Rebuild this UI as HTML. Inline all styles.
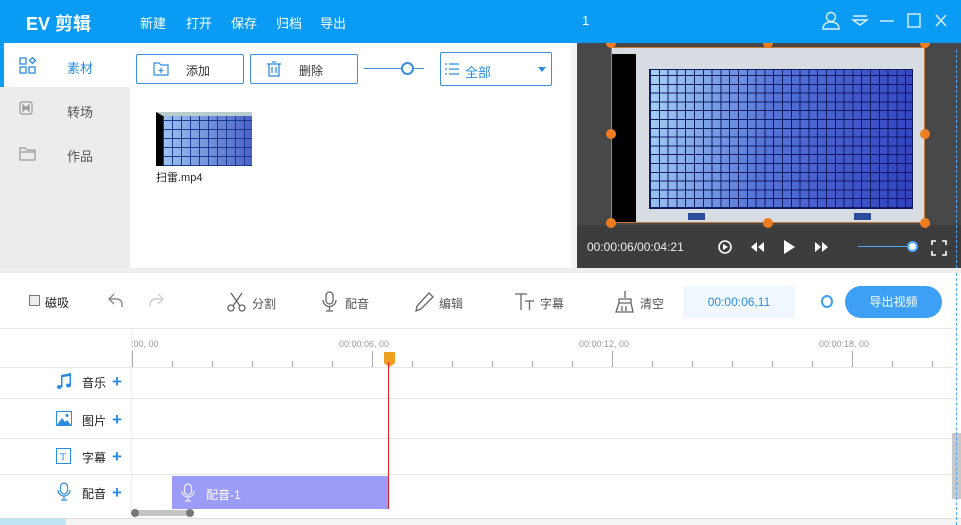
<!DOCTYPE html>
<html><head><meta charset="utf-8"><style>
*{margin:0;padding:0;box-sizing:border-box}
body{width:961px;height:525px;overflow:hidden;background:#fff;font-family:"Liberation Sans","Noto Sans CJK SC",sans-serif;font-size:12px;color:#333;position:relative}
.a{position:absolute}
.hdr{left:0;top:0;width:961px;height:43px;background:#0a9cf5;color:#fff}
.btn{border:1px solid #3d8fdc;border-radius:2px;background:#fff;color:#333;font-size:12px}
.tl{color:#555;font-size:12px}
.track{left:0;width:954px;border-top:1px solid #e6e6e6}
.lab{font-size:12px;color:#222}
.plus{color:#2b8de0;font-size:17px;font-weight:bold;line-height:17px}
</style></head><body>
<div class="a hdr">
 <div class="a" style="left:26px;top:10px;font-size:18px;font-weight:bold">EV 剪辑</div>
 <div class="a" style="left:140px;top:13px;font-size:13px">新建</div>
 <div class="a" style="left:186px;top:13px;font-size:13px">打开</div>
 <div class="a" style="left:231px;top:13px;font-size:13px">保存</div>
 <div class="a" style="left:276px;top:13px;font-size:13px">归档</div>
 <div class="a" style="left:320px;top:13px;font-size:13px">导出</div>
 <div class="a" style="left:582px;top:13px;font-size:13px">1</div>
 <svg class="a" style="left:820px;top:10px" width="130" height="22" fill="none" stroke="#dff0ff" stroke-width="1.4">
  <circle cx="11" cy="7" r="4.5"/><path d="M3 19c0-5 3.5-7 8-7s8 2 8 7z"/>
  <path d="M33 6h14M33 10h14l-7 5z"/>
  <path d="M60 11h14"/>
  <rect x="88" y="4" width="12" height="13"/>
  <path d="M116 5l10 11M126 5l-10 11"/>
 </svg>
</div>
<div class="a" style="left:0;top:43px;width:130px;height:225px;background:#ececec"></div>
<div class="a" style="left:0;top:43px;width:130px;height:44px;background:#fff;border-left:4px solid #0a9cf5"></div>
<svg class="a" style="left:19px;top:57px" width="18" height="18" fill="none" stroke="#2b8de0" stroke-width="1.3"><rect x="1" y="1" width="6" height="6"/><rect x="1" y="10" width="6" height="6"/><rect x="10" y="10" width="6" height="6"/><path d="M13.5 0.5l3 3-3 3-3-3z"/></svg>
<div class="a" style="left:67px;top:58px;color:#2b8de0;font-size:13px">素材</div>
<svg class="a" style="left:19px;top:101px" width="16" height="16" fill="none" stroke="#999" stroke-width="1.2"><rect x="1" y="1" width="12" height="12" rx="2"/><path d="M4 4v6l3-3zM10 4v6l-3-3z" fill="#999"/></svg>
<div class="a" style="left:67px;top:102px;color:#555;font-size:13px">转场</div>
<svg class="a" style="left:19px;top:146px" width="18" height="16" fill="none" stroke="#999" stroke-width="1.2"><path d="M1 2h5l2 2h8v10H1z M1 6h15"/></svg>
<div class="a" style="left:67px;top:146px;color:#555;font-size:13px">作品</div>
<div class="a btn" style="left:136px;top:54px;width:108px;height:30px"><svg class="a" style="left:16px;top:7px" width="16" height="14" fill="none" stroke="#2b8de0" stroke-width="1.2"><path d="M1 1h5l2 2h7v10H1z M8 6v5M5.5 8.5h5"/></svg><span class="a" style="left:49px;top:7px">添加</span></div>
<div class="a btn" style="left:250px;top:54px;width:108px;height:30px"><svg class="a" style="left:15px;top:6px" width="16" height="16" fill="none" stroke="#2b8de0" stroke-width="1.3"><path d="M1 3h14M3 3v12h10V3M6 1h4M6 6v6M10 6v6"/></svg><span class="a" style="left:48px;top:7px">删除</span></div>
<div class="a" style="left:364px;top:68px;width:60px;height:1px;background:#3d8fdc"></div>
<div class="a" style="left:401px;top:62px;width:13px;height:13px;border:2px solid #3d8fdc;border-radius:50%;background:#fff"></div>
<div class="a btn" style="left:440px;top:52px;width:112px;height:34px"><svg class="a" style="left:4px;top:10px" width="14" height="12" stroke="#2b8de0" stroke-width="1.2"><path d="M0 1h2M4 1h10M0 6h2M4 6h10M0 11h2M4 11h10"/></svg><span class="a" style="left:24px;top:9px;color:#2b8de0;font-size:13px">全部</span><div class="a" style="left:97px;top:14px;border:4px solid transparent;border-top:5px solid #2b8de0"></div></div>
<div class="a" style="left:156px;top:112px;width:96px;height:54px;background:repeating-linear-gradient(90deg,#1a3a90 0 1px,transparent 1px 9px),repeating-linear-gradient(0deg,#1a3a90 0 1px,transparent 1px 9px),linear-gradient(90deg,#9bc3f0,#4c63c8);border-left:7px solid #000;border-top:4px solid #bcc"></div>
<div class="a" style="left:156px;top:169px;font-size:11px;color:#222">扫雷.mp4</div>
<div class="a" style="left:571px;top:43px;width:6px;height:225px;background:#f4f4f4"></div>
<div class="a" style="left:577px;top:43px;width:384px;height:225px;background:#484848"></div>
<div class="a" style="left:611px;top:47px;width:314px;height:176px;background:#d8dde3;border:1px solid #c87a3a"></div>
<div class="a" style="left:612px;top:54px;width:24px;height:168px;background:#000"></div>
<div class="a" style="left:649px;top:69px;width:264px;height:140px;background:repeating-linear-gradient(90deg,#0c1a60 0 1px,transparent 1px 8.8px),repeating-linear-gradient(0deg,#0c1a60 0 1px,transparent 1px 8.8px),linear-gradient(100deg,#a9d2f6,#5574d8 45%,#3340c0);border:1px solid #0c1a60"></div>
<div class="a" style="left:688px;top:213px;width:17px;height:7px;background:#2a4c9a"></div>
<div class="a" style="left:854px;top:213px;width:17px;height:7px;background:#2a4c9a"></div>
<div class="a" style="left:577px;top:225px;width:384px;height:43px;background:#3d3d3d"></div>
<div class="a" style="left:606px;top:43px;width:10px;height:5px;background:#f07d20;border-radius:0 0 5px 5px"></div>
<div class="a" style="left:763px;top:43px;width:10px;height:5px;background:#f07d20;border-radius:0 0 5px 5px"></div>
<div class="a" style="left:920px;top:43px;width:10px;height:5px;background:#f07d20;border-radius:0 0 5px 5px"></div>
<div class="a" style="left:606px;top:129px;width:10px;height:10px;background:#f07d20;border-radius:50%"></div>
<div class="a" style="left:920px;top:129px;width:10px;height:10px;background:#f07d20;border-radius:50%"></div>
<div class="a" style="left:606px;top:218px;width:10px;height:10px;background:#f07d20;border-radius:50%"></div>
<div class="a" style="left:763px;top:218px;width:10px;height:10px;background:#f07d20;border-radius:50%"></div>
<div class="a" style="left:920px;top:218px;width:10px;height:10px;background:#f07d20;border-radius:50%"></div>
<div class="a" style="left:587px;top:240px;color:#eee;font-size:12px">00:00:06/00:04:21</div>
<svg class="a" style="left:716px;top:237px" width="120" height="20" fill="#fff"><circle cx="9" cy="10" r="6" fill="none" stroke="#fff" stroke-width="1.6"/><path d="M7 7v6l5-3z"/><path d="M41 5v10l-6-5zM48 5v10l-6-5z"/><path d="M68 3v14l11-7z"/><path d="M99 5v10l6-5zM106 5v10l6-5z"/></svg>
<div class="a" style="left:858px;top:246px;width:56px;height:1px;background:#4aa8ff"></div>
<div class="a" style="left:907px;top:241px;width:11px;height:11px;background:#fff;border:2px solid #4aa8ff;border-radius:50%"></div>
<svg class="a" style="left:931px;top:240px" width="16" height="16" fill="none" stroke="#fff" stroke-width="1.6"><path d="M1 5V1h4M11 1h4v4M15 11v4h-4M5 15H1v-4"/></svg>
<div class="a" style="left:956px;top:50px;height:218px;border-left:1px dashed #4aa8ff"></div>
<div class="a" style="left:0;top:268px;width:961px;height:5px;background:#eee"></div>
<div class="a" style="left:29px;top:295px;width:11px;height:11px;border:1px solid #777;background:#eee"></div>
<div class="a tl" style="left:45px;top:294px;color:#222">磁吸</div>
<svg class="a" style="left:108px;top:292px" width="56" height="18" fill="none" stroke-width="1.4"><path d="M6 2L1 7l5 5M1 7h8a5 5 0 0 1 5 5v3" stroke="#888"/><path d="M50 2l5 5-5 5M55 7h-8a5 5 0 0 0-5 5v3" stroke="#ccc"/></svg>
<svg class="a" style="left:226px;top:291px" width="22" height="22" fill="none" stroke="#666" stroke-width="1.3"><circle cx="5" cy="17" r="3"/><circle cx="16" cy="17" r="3"/><path d="M7 15L16 2M14 15L5 2"/></svg>
<div class="a tl" style="left:252px;top:295px">分割</div>
<svg class="a" style="left:322px;top:291px" width="16" height="22" fill="none" stroke="#666" stroke-width="1.3"><rect x="4" y="1" width="7" height="12" rx="3.5"/><path d="M1 9a6.5 6.5 0 0 0 13 0M7.5 16v4M4 20h7"/></svg>
<div class="a tl" style="left:345px;top:295px">配音</div>
<svg class="a" style="left:413px;top:291px" width="22" height="22" fill="none" stroke="#666" stroke-width="1.3"><path d="M16 2l4 4L8 18l-5 2 1-5z"/></svg>
<div class="a tl" style="left:439px;top:295px">编辑</div>
<svg class="a" style="left:514px;top:292px" width="22" height="20" fill="none" stroke="#666" stroke-width="1.3"><path d="M1 2h12M7 2v16M11 9h9M15.5 9v9"/></svg>
<div class="a tl" style="left:540px;top:295px">字幕</div>
<svg class="a" style="left:613px;top:290px" width="22" height="24" fill="none" stroke="#666" stroke-width="1.3"><path d="M12 1v7M6 9h12v4H6zM6 13l-3 9h17l-2-9M9 16v5M13 16v5"/></svg>
<div class="a tl" style="left:640px;top:295px">清空</div>
<div class="a" style="left:683px;top:286px;width:112px;height:32px;background:#f1f7ff;color:#2b8de0;font-size:12px;text-align:center;line-height:32px">00:00:06,11</div>
<div class="a" style="left:821px;top:295px;width:12px;height:13px;border:2px solid #3ea0f5;border-radius:50%"></div>
<div class="a" style="left:845px;top:286px;width:97px;height:32px;background:#3ea0f5;border-radius:16px;color:#fff;text-align:center;line-height:32px;font-size:12px">导出视频</div>
<div class="a" style="left:0;top:328px;width:954px;border-top:1px solid #e6e6e6"></div>
<div class="a" style="left:131px;top:329px;height:181px;border-left:1px solid #eee"></div>
<div class="a" style="left:131px;top:339px;font-size:9px;color:#999">:00, 00</div>
<div class="a" style="left:339px;top:339px;font-size:9px;color:#999">00:00:06, 00</div>
<div class="a" style="left:579px;top:339px;font-size:9px;color:#999">00:00:12, 00</div>
<div class="a" style="left:819px;top:339px;font-size:9px;color:#999">00:00:18, 00</div>
<div class="a" style="left:132px;top:361px;width:822px;height:6px;background:repeating-linear-gradient(90deg,#aaa 0 1px,transparent 1px 40px)"></div>
<div class="a" style="left:132px;top:351px;width:822px;height:16px;background:repeating-linear-gradient(90deg,#aaa 0 1px,transparent 1px 240px)"></div>
<div class="a" style="left:384px;top:352px;width:11px;height:15px;background:#f0a020;clip-path:polygon(0 0,100% 0,100% 75%,50% 100%,0 75%)"></div>
<div class="a track" style="top:367px"></div>
<div class="a track" style="top:398px"></div>
<div class="a track" style="top:438px"></div>
<div class="a track" style="top:474px"></div>
<svg class="a" style="left:56px;top:373px" width="16" height="17" fill="#2b8de0"><path d="M5 2l10-2v12h-1.5V3L6.5 4.3V14H5z"/><ellipse cx="3.3" cy="14" rx="2.5" ry="2"/><ellipse cx="12.5" cy="12.5" rx="2.5" ry="2"/></svg>
<div class="a lab" style="left:82px;top:374px">音乐</div><div class="a plus" style="left:112px;top:373px">+</div>
<svg class="a" style="left:56px;top:411px" width="16" height="15"><rect x="0.5" y="0.5" width="15" height="14" fill="none" stroke="#2b8de0"/><path d="M1 14l5-7 3 4 2-2 4 5z" fill="#2b8de0"/><circle cx="11" cy="4.5" r="1.5" fill="#2b8de0"/></svg>
<div class="a lab" style="left:82px;top:412px">图片</div><div class="a plus" style="left:112px;top:411px">+</div>
<svg class="a" style="left:56px;top:448px" width="15" height="16"><rect x="0.5" y="0.5" width="14" height="15" fill="none" stroke="#2b8de0"/><text x="4" y="12" font-size="10" fill="#2b8de0" font-family="Liberation Serif">T</text></svg>
<div class="a lab" style="left:82px;top:449px">字幕</div><div class="a plus" style="left:112px;top:448px">+</div>
<svg class="a" style="left:57px;top:482px" width="14" height="20" fill="none" stroke="#2b8de0" stroke-width="1.2"><rect x="3.5" y="1" width="7" height="11" rx="3.5"/><path d="M1 8a6 6 0 0 0 12 0M7 14v4M4 18h6"/></svg>
<div class="a lab" style="left:82px;top:485px">配音</div><div class="a plus" style="left:112px;top:484px">+</div>
<div class="a" style="left:172px;top:476px;width:217px;height:33px;background:#9c9cf8"></div>
<svg class="a" style="left:181px;top:483px" width="14" height="20" fill="none" stroke="#eef" stroke-width="1.2"><rect x="3.5" y="1" width="7" height="11" rx="3.5"/><path d="M1 8a6 6 0 0 0 12 0M7 14v4M4 18h6"/></svg>
<div class="a" style="left:206px;top:486px;color:#fff;font-size:12px">配音-1</div>
<div class="a" style="left:388px;top:362px;width:1px;height:147px;background:#e02020"></div>
<div class="a" style="left:133px;top:510px;width:58px;height:6px;background:#c4c4c4"></div>
<div class="a" style="left:131px;top:509px;width:8px;height:8px;background:#777;border-radius:50%"></div>
<div class="a" style="left:186px;top:509px;width:8px;height:8px;background:#777;border-radius:50%"></div>
<div class="a" style="left:952px;top:433px;width:9px;height:66px;background:#c8c8c8"></div>
<div class="a" style="left:0;top:518px;width:961px;height:7px;background:#f4f4f4;border-top:1px solid #ddd"></div>
<div class="a" style="left:0;top:519px;width:66px;height:6px;background:#bfe6f5"></div>
<div class="a" style="left:956px;top:273px;height:252px;border-left:1px dashed #4aa8ff"></div>
</body></html>
